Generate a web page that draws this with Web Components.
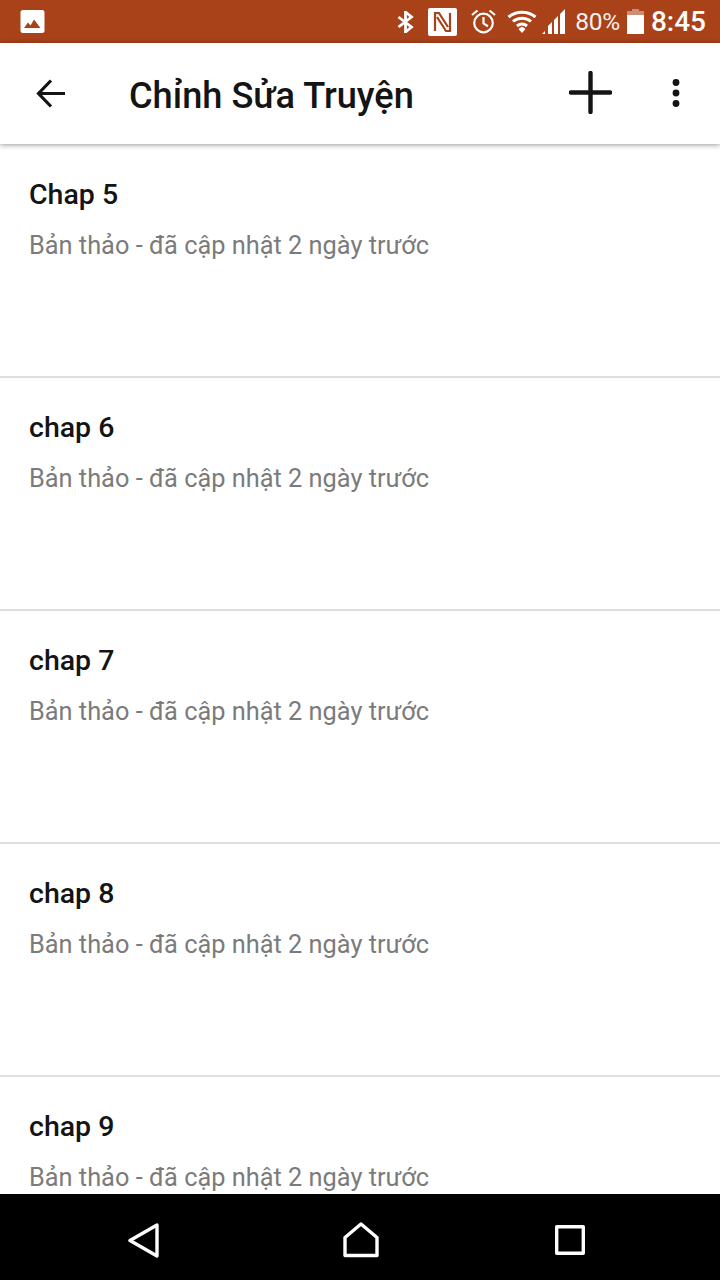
<!DOCTYPE html>
<html lang="vi">
<head>
<meta charset="utf-8">
<title>Chỉnh Sửa Truyện</title>
<style>
    html, body {
        margin: 0;
        height: 1280px;
        overflow: hidden;
        background: #fff;
        font-family: Roboto, "Liberation Sans", sans-serif;
    }

    body {
        display: flex;
        flex-direction: column;
    }
</style>
</head>
<body>
<status-bar></status-bar>
<app-bar title="Chỉnh Sửa Truyện"></app-bar>
<part-list>
    <part-row title="Chap 5" meta="Bản thảo - đã cập nhật 2 ngày trước"></part-row>
    <part-row title="chap 6" meta="Bản thảo - đã cập nhật 2 ngày trước"></part-row>
    <part-row title="chap 7" meta="Bản thảo - đã cập nhật 2 ngày trước"></part-row>
    <part-row title="chap 8" meta="Bản thảo - đã cập nhật 2 ngày trước"></part-row>
    <part-row title="chap 9" meta="Bản thảo - đã cập nhật 2 ngày trước"></part-row>
</part-list>
<nav-bar></nav-bar>
<script>
class StatusBar extends HTMLElement {
    constructor() {
        super();
        this.attachShadow({ mode: 'open' });
        this.shadowRoot.innerHTML = `
            <style>
                :host {
                    display: flex;
                    flex: none;
                    align-items: center;
                    height: 43px;
                    background: #a94119;
                    color: #fff;
                    padding: 0 14px 0 20px;
                    box-sizing: border-box;
                }
                svg { display: block; flex: none; }
                .spacer { flex: 1; }
                .pct { font-size: 24.5px; margin-left: 9px; letter-spacing: -0.3px; opacity: 0.92; }
                .time { font-size: 28px; font-weight: 500; margin-left: 7px; }
                .bt { margin-right: 14px; }
                .nfc { margin-right: 14px; }
                .alarm { margin-right: 11px; }
                .wifi { margin-right: 4px; }
                .batt { margin-left: 7px; }
            </style>
            <svg width="25" height="25" viewBox="0 0 25 25">
                <rect x="0.5" y="1" width="24" height="23" rx="2.5" fill="#fff"/>
                <path d="M4 19l4-5.500 2.500 3 3.500-6 6.500 8.500z" fill="#a94119"/>
            </svg>
            <span class="spacer"></span>
            <svg class="bt" width="17" height="22" viewBox="0 0 17 22" fill="none" stroke="#fff" stroke-width="2.800">
                <path d="M1.500 6l13 10-6 5V1l6 5-13 10"/>
            </svg>
            <svg class="nfc" width="29" height="28" viewBox="0 0 29 28">
                <rect width="29" height="28" rx="2" fill="#fff"/>
                <path d="M7 23V5h4l9 14" fill="none" stroke="#a94119" stroke-width="2.200"/>
                <path d="M22 5v18h-4L9 9" fill="none" stroke="#a94119" stroke-width="2.200"/>
            </svg>
            <svg class="alarm" width="25" height="25" viewBox="0 0 25 25" fill="none" stroke="#fff" stroke-width="2.200">
                <circle cx="12.500" cy="14" r="9.300"/>
                <path d="M12.500 8v6.500l4.500 2.800M1 6l5.500-4.500M24 6l-5.500-4.500"/>
            </svg>
            <svg class="wifi" width="30" height="23" viewBox="0 0 30 23" fill="none" stroke="#fff" stroke-width="3">
                <path d="M1.500 7C9 .5 21 .5 28.500 7M6 11.500c5-4.500 13-4.500 18 0M10 16c3-2.600 7-2.600 10 0"/>
                <path d="M11.500 19L15 16.500l3.500 2.500L15 23z" fill="#fff" stroke="none"/>
            </svg>
            <svg width="25" height="25" viewBox="0 0 25 25" fill="#fff">
                <path d="M1 25l3-3v3zM7 25v-8l4-4v12zM13 25V11l4-4v18zM19 25V5l5-5v25z"/>
            </svg>
            <span class="pct">80%</span>
            <svg class="batt" width="17" height="25" viewBox="0 0 17 25">
                <path d="M5 0h7v2h5v4H0V2h5z" fill="#fff" opacity="0.4"/>
                <rect y="6" width="17" height="19" fill="#fff"/>
            </svg>
            <span class="time">8:45</span>
        `;
    }
}

class AppBar extends HTMLElement {
    constructor() {
        super();
        this.attachShadow({ mode: 'open' });
        this.shadowRoot.innerHTML = `
            <style>
                :host {
                    display: flex;
                    flex: none;
                    align-items: center;
                    height: 101px;
                    padding: 0 40px 2px 36px;
                    box-sizing: border-box;
                    background: #fff;
                    color: #141414;
                    position: relative;
                    z-index: 1;
                    box-shadow: 0 1px 5px rgba(0, 0, 0, 0.4);
                }
                svg { display: block; flex: none; }
                h1 {
                    flex: 1;
                    margin: 6px 0 0 64px;
                    font-size: 36.2px;
                    font-weight: 500;
                }
                .back { margin-top: 2px; }
                .add { margin: 0 60px 1px 0; }
            </style>
            <svg class="back" width="29" height="29" viewBox="0 0 29 29" fill="none" stroke="#141414" stroke-width="3.200">
                <path d="M29 14.500H3M15 1.500L2.500 14.500 15 27.500"/>
            </svg>
            <h1></h1>
            <svg class="add" width="43" height="43" viewBox="0 0 43 43" stroke="#141414" stroke-width="4.400" stroke-linecap="round">
                <path d="M2 21.500h39M21.500 2v39"/>
            </svg>
            <svg width="8" height="28" viewBox="0 0 8 28" fill="#141414">
                <circle cx="4" cy="3.500" r="3.400"/>
                <circle cx="4" cy="14" r="3.400"/>
                <circle cx="4" cy="24.500" r="3.400"/>
            </svg>
        `;
        this.shadowRoot.querySelector('h1').textContent = this.getAttribute('title');
    }
}

class PartList extends HTMLElement {
    constructor() {
        super();
        this.attachShadow({ mode: 'open' });
        this.shadowRoot.innerHTML = `
            <style>
                :host {
                    display: block;
                    flex: 1;
                    min-height: 0;
                    overflow: hidden;
                    padding-top: 1px;
                }
            </style>
            <slot></slot>
        `;
    }
}

class PartRow extends HTMLElement {
    constructor() {
        super();
        this.attachShadow({ mode: 'open' });
        this.shadowRoot.innerHTML = `
            <style>
                :host {
                    display: block;
                    height: 233px;
                    box-sizing: border-box;
                    padding: 31px 29px 0;
                    border-bottom: 2px solid #dedede;
                }
                .title {
                    font-size: 28.5px;
                    line-height: 38px;
                    font-weight: 500;
                    color: #141414;
                }
                .meta {
                    margin-top: 12px;
                    font-size: 25.35px;
                    line-height: 38px;
                    color: #7b7b7b;
                }
            </style>
            <div class="title"></div>
            <div class="meta"></div>
        `;
        this.shadowRoot.querySelector('.title').textContent = this.getAttribute('title');
        this.shadowRoot.querySelector('.meta').textContent = this.getAttribute('meta');
    }
}

class NavBar extends HTMLElement {
    constructor() {
        super();
        this.attachShadow({ mode: 'open' });
        this.shadowRoot.innerHTML = `
            <style>
                :host {
                    display: flex;
                    flex: none;
                    align-items: center;
                    justify-content: space-between;
                    height: 86px;
                    padding: 6px 135px 0 128px;
                    box-sizing: border-box;
                    background: #000;
                }
                svg { display: block; }
                .home { margin-left: 8px; }
            </style>
            <svg width="31" height="35" viewBox="0 0 31 35" fill="none" stroke="#fff" stroke-width="3.400" stroke-linejoin="round">
                <path d="M2 17.500L29 2v31z"/>
            </svg>
            <svg class="home" width="36" height="36" viewBox="0 0 36 36" fill="none" stroke="#fff" stroke-width="3.400" stroke-linejoin="round">
                <path d="M2 15.500L18 2l16 13.500V33.500H2z"/>
            </svg>
            <svg width="30" height="30" viewBox="0 0 30 30" fill="none" stroke="#fff" stroke-width="3.400" stroke-linejoin="round">
                <rect x="1.700" y="1.700" width="26.600" height="26.600"/>
            </svg>
        `;
    }
}

customElements.define('status-bar', StatusBar);
customElements.define('app-bar', AppBar);
customElements.define('part-list', PartList);
customElements.define('part-row', PartRow);
customElements.define('nav-bar', NavBar);
</script>
</body>
</html>
